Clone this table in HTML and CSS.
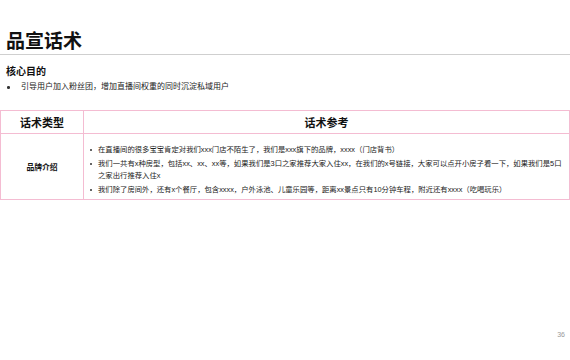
FILE: index.html
```html
<!DOCTYPE html>
<html lang="zh">
<head>
<meta charset="utf-8">
<link rel="stylesheet" href="styles.css">
</head>
<body>
<div class="slide">
  <h1 class="title">品宣话术</h1>
  <div class="goal">
    <h2 class="goal-title">核心目的</h2>
    <ul class="goal-list">
      <li>引导用户加入粉丝团，增加直播间权重的同时沉淀私域用户</li>
    </ul>
  </div>
  <div class="table">
    <div class="cell head first">话术类型</div>
    <div class="cell head">话术参考</div>
    <div class="cell type first">品牌介绍</div>
    <div class="cell body">
      <ul class="ref-list">
        <li>在直播间的很多宝宝肯定对我们xxx门店不陌生了，我们是xxx旗下的品牌，xxxx（门店背书）</li>
        <li>我们一共有x种房型，包括xx、xx、xx等，如果我们是3口之家推荐大家入住xx，在我们的x号链接，大家可以点开小房子看一下，如果我们是5口之家出行推荐入住x</li>
        <li>我们除了房间外，还有x个餐厅，包含xxxx，户外泳池、儿童乐园等，距离xx景点只有10分钟车程，附近还有xxxx（吃喝玩乐）</li>
      </ul>
    </div>
  </div>
  <div class="page-num">36</div>
</div>
</body>
</html>
```

FILE: styles.css
```css
* { box-sizing: border-box; }
html, body {
  margin: 0;
  padding: 0;
  background: #ffffff;
}
body {
  font-family: "Liberation Sans", "Noto Sans CJK SC", sans-serif;
  color: #1a1a1a;
}
.slide {
  width: 570px;
  height: 360px;
  display: flex;
  flex-direction: column;
}
.title {
  margin: 0;
  padding: 30px 0 0 6px;
  height: 55px;
  font-size: 19px;
  line-height: 24px;
  font-weight: 700;
  color: #111;
  border-bottom: 1px solid #cfcfcf;
}
.goal {
  padding: 10px 0 0 6px;
}
.goal-title {
  margin: 0 0 2px;
  font-size: 10px;
  line-height: 14px;
  font-weight: 700;
  color: #111;
}
.goal-list {
  margin: 0;
  padding: 0 0 0 15px;
  list-style: none;
}
.goal-list li {
  position: relative;
  font-size: 8px;
  line-height: 12px;
  color: #222;
}
.goal-list li::before {
  content: "";
  position: absolute;
  left: -14px;
  top: 5px;
  width: 2.5px;
  height: 2.5px;
  border-radius: 50%;
  background: #333;
}
.table {
  margin-top: 17px;
  width: 570px;
  display: grid;
  grid-template-columns: 83px 1fr;
  grid-template-rows: 23px 66px;
  border-top: 1px solid #f4bcd2;
  border-right: 1px solid #f4bcd2;
}
.cell {
  border-bottom: 1px solid #f4bcd2;
  border-left: 1px solid #f4bcd2;
}
.head {
  display: flex;
  align-items: center;
  justify-content: center;
  font-size: 11px;
  font-weight: 700;
  color: #111;
}
.type {
  display: flex;
  align-items: center;
  justify-content: center;
  font-size: 7.8px;
  font-weight: 700;
  color: #111;
}
.body {
  padding: 10px 3px 0 14px;
}
.ref-list {
  margin: 0;
  padding: 0;
  list-style: none;
  display: flex;
  flex-direction: column;
  gap: 2px;
}
.ref-list li {
  position: relative;
  font-size: 7.35px;
  line-height: 12px;
  color: #222;
}
.ref-list li::before {
  content: "";
  position: absolute;
  left: -8px;
  top: 5px;
  width: 2.2px;
  height: 2.2px;
  border-radius: 50%;
  background: #333;
}
.page-num {
  margin-top: auto;
  align-self: flex-end;
  padding: 0 5px 22px 0;
  font-size: 7px;
  color: #999;
}
```
